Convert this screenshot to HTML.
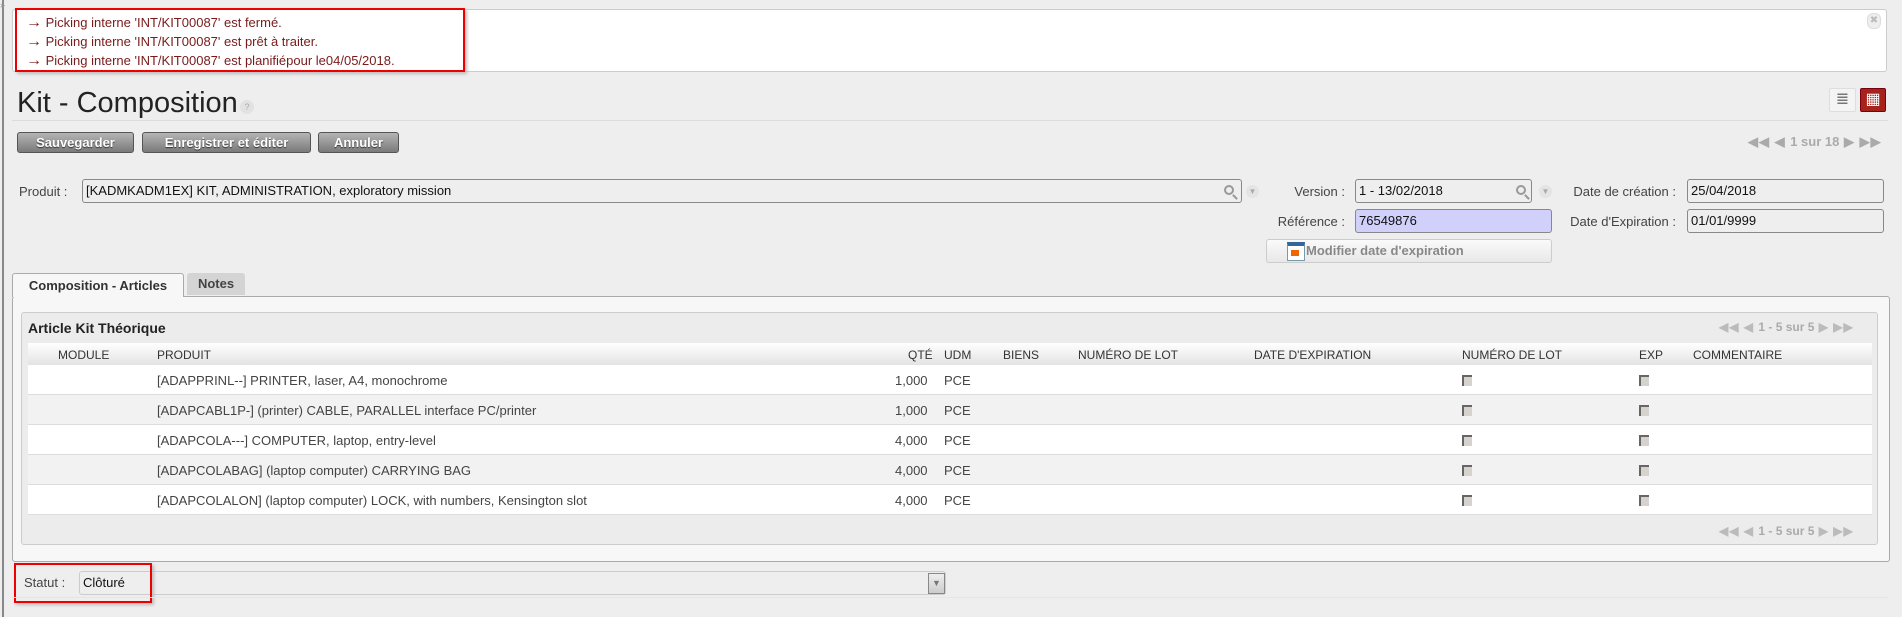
<!DOCTYPE html>
<html><head><meta charset="utf-8"><style>
*{box-sizing:border-box;margin:0;padding:0}
body{width:1902px;height:617px;background:#efeeee;font-family:"Liberation Sans",Arial,sans-serif;font-size:13px;color:#333;position:relative;overflow:hidden}
.a{position:absolute}
.inp{position:absolute;border:1px solid #888;border-radius:3px;background:#efeeee;height:24px;line-height:22px;padding-left:3px;color:#111;font-size:13px}
.lbl{position:absolute;color:#444;font-size:13px;text-align:right}
.btn{position:absolute;top:132px;height:21px;border:1px solid #555;border-radius:3px;background:linear-gradient(#b5b5b5,#7a7a7a);color:#fff;font-weight:bold;font-size:13px;text-align:center;line-height:19px;text-shadow:0 1px 1px #333}
.mag{position:absolute;width:10px;height:10px;border:2px solid #999;border-radius:50%}
.mag:after{content:"";position:absolute;width:2px;height:6px;background:#999;left:8px;top:7px;transform:rotate(-45deg)}
.dd{position:absolute;width:13px;height:13px;border-radius:50%;background:#e4e4e4;color:#aaa;font-size:8px;text-align:center;line-height:13px}
.th{position:absolute;top:348px;font-size:12px;color:#333;text-transform:uppercase}
.row{position:absolute;left:28px;width:1844px;height:30px;border-bottom:1px solid #ddd}
.row span{position:absolute;top:8px;font-size:13px;color:#444}
.cb{position:absolute;top:10px;width:10px;height:11px;background:#d6d3ce;border-top:2px solid #666;border-left:2px solid #666}
.pg{position:absolute;color:#aaa;font-weight:bold;font-size:13px}
.ar{font-size:16px}
</style></head><body>
<div class="a" style="left:2px;top:0;width:2px;height:617px;background:#888"></div>
<div class="a" style="left:0;top:0;width:8px;height:14px;color:#999;font-size:9px">»</div>
<div class="a" style="left:12px;top:9px;width:1875px;height:63px;background:#fff;border:1px solid #ccc;border-radius:3px"></div>
<div class="a" style="left:15px;top:8px;width:450px;height:64px;border:2px solid #e00;box-shadow:2px 2px 3px #bbb"></div>
<div class="a" style="left:26px;top:13px;color:#7a1a1a;font-size:13px;line-height:19px"><span class="ar">→</span> Picking interne 'INT/KIT00087' est fermé.<br><span class="ar">→</span> Picking interne 'INT/KIT00087' est prêt à traiter.<br><span class="ar">→</span> Picking interne 'INT/KIT00087' est planifiépour le04/05/2018.</div>
<div class="a" style="left:1867px;top:13px;width:14px;height:16px;border-radius:6px;background:#eee;border:1px solid #ddd;color:#bbb;font-size:10px;text-align:center;line-height:14px">✖</div>
<div class="a" style="left:17px;top:87px;font-size:29px;color:#222">Kit - Composition</div>
<div class="a" style="left:240px;top:100px;width:14px;height:14px;border-radius:50%;background:#e2e2e2;color:#aaa;font-size:9px;text-align:center;line-height:14px">?</div>
<div class="a" style="left:12px;top:120px;width:1876px;height:1px;background:#ddd"></div>
<div class="a" style="left:1829px;top:88px;width:27px;height:24px;background:#f4f4f4;border:1px solid #ddd;border-radius:2px;color:#777;text-align:center;font-size:16px;line-height:22px">≣</div>
<div class="a" style="left:1860px;top:88px;width:26px;height:24px;background:#a8221c;border:1px solid #701;border-radius:2px;color:#fff;text-align:center;font-size:16px;line-height:22px">▦</div>
<div class="btn" style="left:17px;width:117px">Sauvegarder</div>
<div class="btn" style="left:142px;width:169px">Enregistrer et éditer</div>
<div class="btn" style="left:318px;width:81px">Annuler</div>
<div class="pg" style="left:1748px;top:134px;letter-spacing:1px">◀◀ ◀ <span style="letter-spacing:0">1 sur 18</span> ▶ ▶▶</div>
<div class="lbl" style="left:19px;top:184px">Produit :</div>
<div class="inp" style="left:82px;top:179px;width:1160px">[KADMKADM1EX] KIT, ADMINISTRATION, exploratory mission</div>
<div class="mag" style="left:1224px;top:185px"></div>
<div class="dd" style="left:1246px;top:185px">▼</div>
<div class="lbl" style="left:1280px;top:184px;width:65px">Version :</div>
<div class="inp" style="left:1355px;top:179px;width:177px">1 - 13/02/2018</div>
<div class="mag" style="left:1516px;top:185px"></div>
<div class="dd" style="left:1539px;top:185px">▼</div>
<div class="lbl" style="left:1560px;top:184px;width:116px">Date de création :</div>
<div class="inp" style="left:1687px;top:179px;width:197px">25/04/2018</div>
<div class="lbl" style="left:1260px;top:214px;width:85px">Référence :</div>
<div class="inp" style="left:1355px;top:209px;width:197px;background:#d0d0fb">76549876</div>
<div class="lbl" style="left:1556px;top:214px;width:120px">Date d'Expiration :</div>
<div class="inp" style="left:1687px;top:209px;width:197px">01/01/9999</div>
<div class="a" style="left:1266px;top:239px;width:286px;height:24px;border:1px solid #ccc;border-radius:3px;background:linear-gradient(#fafafa,#e8e8e8);color:#888;font-weight:bold;font-size:13px;line-height:22px;padding-left:39px">Modifier date d'expiration</div>
<div class="a" style="left:1287px;top:242px;width:18px;height:19px;border:1px solid #79a;background:#fff;border-top:4px solid #369"><div style="margin:4px 0 0 3px;width:8px;height:6px;background:#e60"></div></div>
<div class="a" style="left:12px;top:296px;width:1878px;height:266px;border:1px solid #aaa;border-radius:3px;background:#f7f7f7"></div>
<div class="a" style="left:12px;top:273px;width:172px;height:24px;background:#f7f7f7;border:1px solid #aaa;border-bottom:none;border-radius:3px 3px 0 0;font-weight:bold;font-size:13px;color:#333;text-align:center;line-height:24px">Composition - Articles</div>
<div class="a" style="left:187px;top:273px;width:58px;height:22px;background:#d4d4d4;border-radius:3px 3px 0 0;font-weight:bold;font-size:13px;color:#444;text-align:center;line-height:22px">Notes</div>
<div class="a" style="left:21px;top:312px;width:1857px;height:233px;background:#ececec;border:1px solid #ccc;border-radius:3px"></div>
<div class="a" style="left:28px;top:320px;font-weight:bold;font-size:14px;color:#222">Article Kit Théorique</div>
<div class="pg" style="left:1719px;top:320px;font-size:12px;letter-spacing:1px;color:#bbb">◀◀ ◀ <span style="color:#aaa;letter-spacing:0">1 - 5 sur 5</span> ▶ ▶▶</div>
<div class="a" style="left:28px;top:343px;width:1844px;height:22px;background:linear-gradient(#fff,#e3e3e3)"></div>
<div class="th" style="left:58px">Module</div><div class="th" style="left:157px">Produit</div><div class="th" style="left:908px">QTÉ</div><div class="th" style="left:944px">UDM</div><div class="th" style="left:1003px">Biens</div><div class="th" style="left:1078px">Numéro de lot</div><div class="th" style="left:1254px">Date d'expiration</div><div class="th" style="left:1462px">Numéro de lot</div><div class="th" style="left:1639px">EXP</div><div class="th" style="left:1693px">Commentaire</div>
<div class="row" style="top:365px;background:#fff"><span style="left:129px">[ADAPPRINL--] PRINTER, laser, A4, monochrome</span><span style="left:867px">1,000</span><span style="left:916px">PCE</span><i class="cb" style="left:1434px"></i><i class="cb" style="left:1611px"></i></div>
<div class="row" style="top:395px;background:#f2f2f2"><span style="left:129px">[ADAPCABL1P-] (printer) CABLE, PARALLEL interface PC/printer</span><span style="left:867px">1,000</span><span style="left:916px">PCE</span><i class="cb" style="left:1434px"></i><i class="cb" style="left:1611px"></i></div>
<div class="row" style="top:425px;background:#fff"><span style="left:129px">[ADAPCOLA---] COMPUTER, laptop, entry-level</span><span style="left:867px">4,000</span><span style="left:916px">PCE</span><i class="cb" style="left:1434px"></i><i class="cb" style="left:1611px"></i></div>
<div class="row" style="top:455px;background:#f2f2f2"><span style="left:129px">[ADAPCOLABAG] (laptop computer) CARRYING BAG</span><span style="left:867px">4,000</span><span style="left:916px">PCE</span><i class="cb" style="left:1434px"></i><i class="cb" style="left:1611px"></i></div>
<div class="row" style="top:485px;background:#fff"><span style="left:129px">[ADAPCOLALON] (laptop computer) LOCK, with numbers, Kensington slot</span><span style="left:867px">4,000</span><span style="left:916px">PCE</span><i class="cb" style="left:1434px"></i><i class="cb" style="left:1611px"></i></div>
<div class="pg" style="left:1719px;top:524px;font-size:12px;letter-spacing:1px;color:#bbb">◀◀ ◀ <span style="color:#aaa;letter-spacing:0">1 - 5 sur 5</span> ▶ ▶▶</div>
<div class="lbl" style="left:24px;top:575px">Statut :</div>
<div class="inp" style="left:79px;top:571px;width:867px;border-color:#ccc;line-height:21px">Clôturé</div>
<div class="a" style="left:928px;top:573px;width:17px;height:21px;background:linear-gradient(#eee,#ccc);border:1px solid #888;color:#777;font-size:9px;text-align:center;line-height:19px">▼</div>
<div class="a" style="left:14px;top:563px;width:138px;height:40px;border:2px solid #e00;box-shadow:2px 2px 3px #bbb"></div>
<div class="a" style="left:12px;top:597px;width:1876px;height:1px;background:#e6e6e6"></div>
</body></html>
